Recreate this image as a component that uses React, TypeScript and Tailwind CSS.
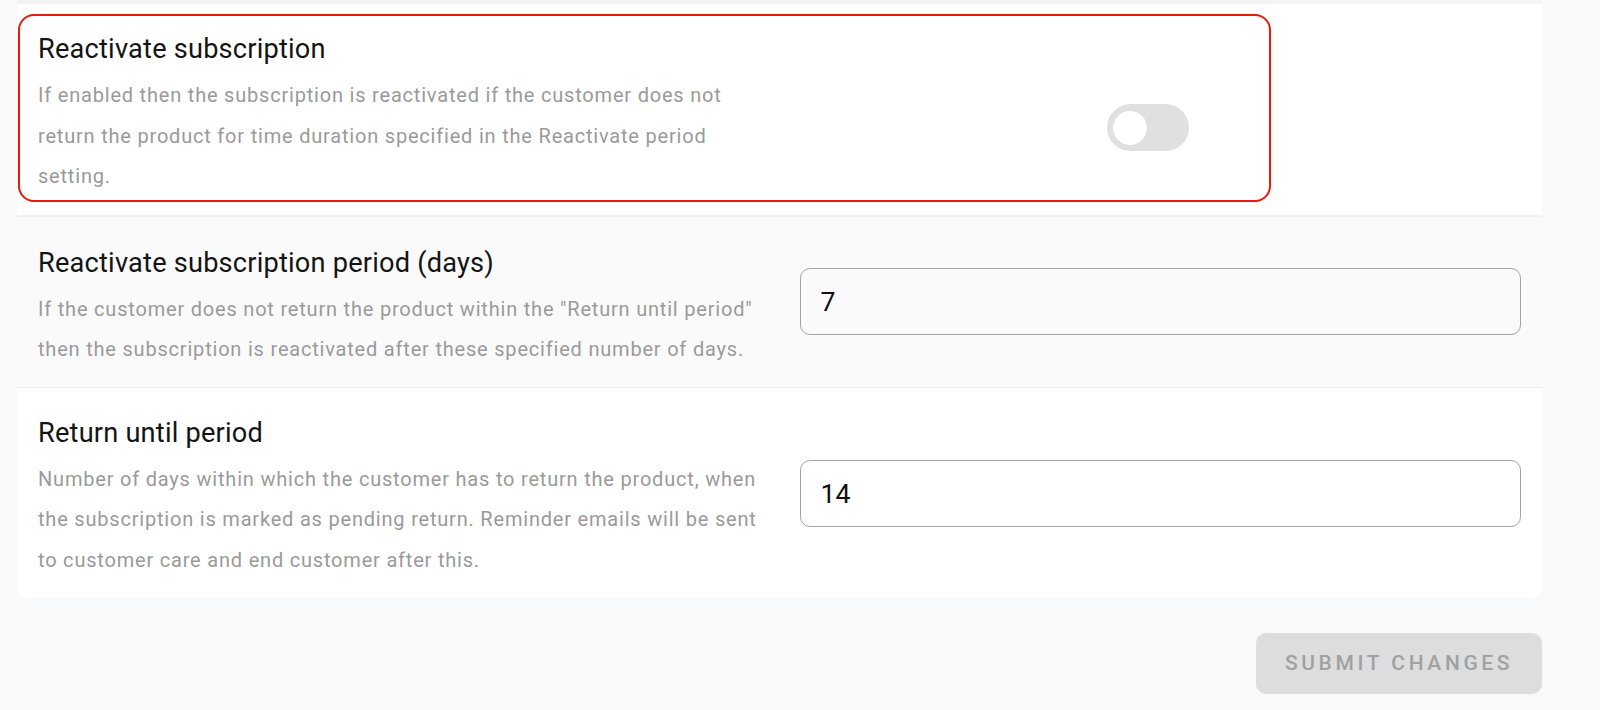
import React, { useState } from 'react';

const font = { fontFamily: 'Roboto, "Noto Sans", sans-serif' };

type ToggleProps = {
  checked: boolean;
  onChange: (v: boolean) => void;
};

const Toggle = ({ checked, onChange }: ToggleProps) => (
  <button
    type="button"
    onClick={() => onChange(!checked)}
    className={`flex h-[47px] w-[82px] items-center rounded-full px-[6px] ${
      checked ? 'justify-end bg-[#90caf9]' : 'justify-start bg-[#e0e0e0]'
    }`}
  >
    <span className="h-[34px] w-[34px] rounded-full bg-white" />
  </button>
);

type NumberRowProps = {
  title: string;
  description: string;
  value: string;
  onChange: (v: string) => void;
  className: string;
  inputClassName?: string;
};

const NumberRow = ({ title, description, value, onChange, className, inputClassName = '' }: NumberRowProps) => (
  <div className={`grid grid-cols-2 items-center gap-[40px] px-[21px] ${className}`}>
    <div className="flex flex-col gap-[4px]">
      <h3 className="text-[27.2px] leading-[43px] tracking-[0.2px] text-[#141414]">{title}</h3>
      <p className="mr-[-12px] text-[20px] leading-[40.5px] tracking-[0.8px] text-[#9a9a9a]">{description}</p>
    </div>
    <input
      value={value}
      onChange={e => onChange(e.target.value)}
      className={`h-[67px] w-full rounded-[10px] border border-[#a3a3a3] bg-transparent px-[20px] text-[26.7px] text-[#111] outline-none ${inputClassName}`}
    />
  </div>
);

export default function App() {
  const [reactivate, setReactivate] = useState(false);
  const [period, setPeriod] = useState('7');
  const [returnUntil, setReturnUntil] = useState('14');

  return (
    <div className="min-h-[710px] w-full bg-[#f8f9fb] pl-[17px]" style={font}>
      <div className="w-[1525px] overflow-hidden rounded-b-[10px] bg-white">
        <div className="h-[4px] bg-[#f4f4f4]" />

        {/* Reactivate subscription (highlighted) */}
        <div className="border-b-2 border-[#f1f1f1] pb-[13px] pl-[1px] pt-[10px]">
          <div className="flex w-[1253px] rounded-[16px] border-2 border-[#ea1a0b] pb-[3px] pl-[18px] pt-[12px]">
            <div className="flex w-[722px] flex-col gap-[4px]">
              <h3 className="text-[27.2px] leading-[43px] tracking-[0.2px] text-[#141414]">
                Reactivate subscription
              </h3>
              <p className="text-[20px] leading-[40.5px] tracking-[0.8px] text-[#9a9a9a]">
                If enabled then the subscription is reactivated if the customer does not return the
                product for time duration specified in the Reactivate period setting.
              </p>
            </div>
            <div className="ml-auto mr-[80px] mt-[76px] self-start">
              <Toggle checked={reactivate} onChange={setReactivate} />
            </div>
          </div>
        </div>

        <NumberRow
          title="Reactivate subscription period (days)"
          description={'If the customer does not return the product within the "Return until period" then the subscription is reactivated after these specified number of days.'}
          value={period}
          onChange={setPeriod}
          className="border-b border-[#f0f0f0] bg-[#fafafa] pb-[17px] pt-[25px]"
          inputClassName="mb-[8px]"
        />

        <NumberRow
          title="Return until period"
          description="Number of days within which the customer has to return the product, when the subscription is marked as pending return. Reminder emails will be sent to customer care and end customer after this."
          value={returnUntil}
          onChange={setReturnUntil}
          className="pb-[18px] pt-[24px]"
          inputClassName="mb-[4px]"
        />
      </div>

      <div className="flex w-[1525px] justify-end pt-[35px]">
        <button
          type="button"
          disabled
          className="h-[61px] w-[286px] rounded-[10px] bg-[#dcdddf] text-[21px] font-medium uppercase tracking-[3.6px] text-[#a1a1a1]"
        >
          Submit changes
        </button>
      </div>
    </div>
  );
}
